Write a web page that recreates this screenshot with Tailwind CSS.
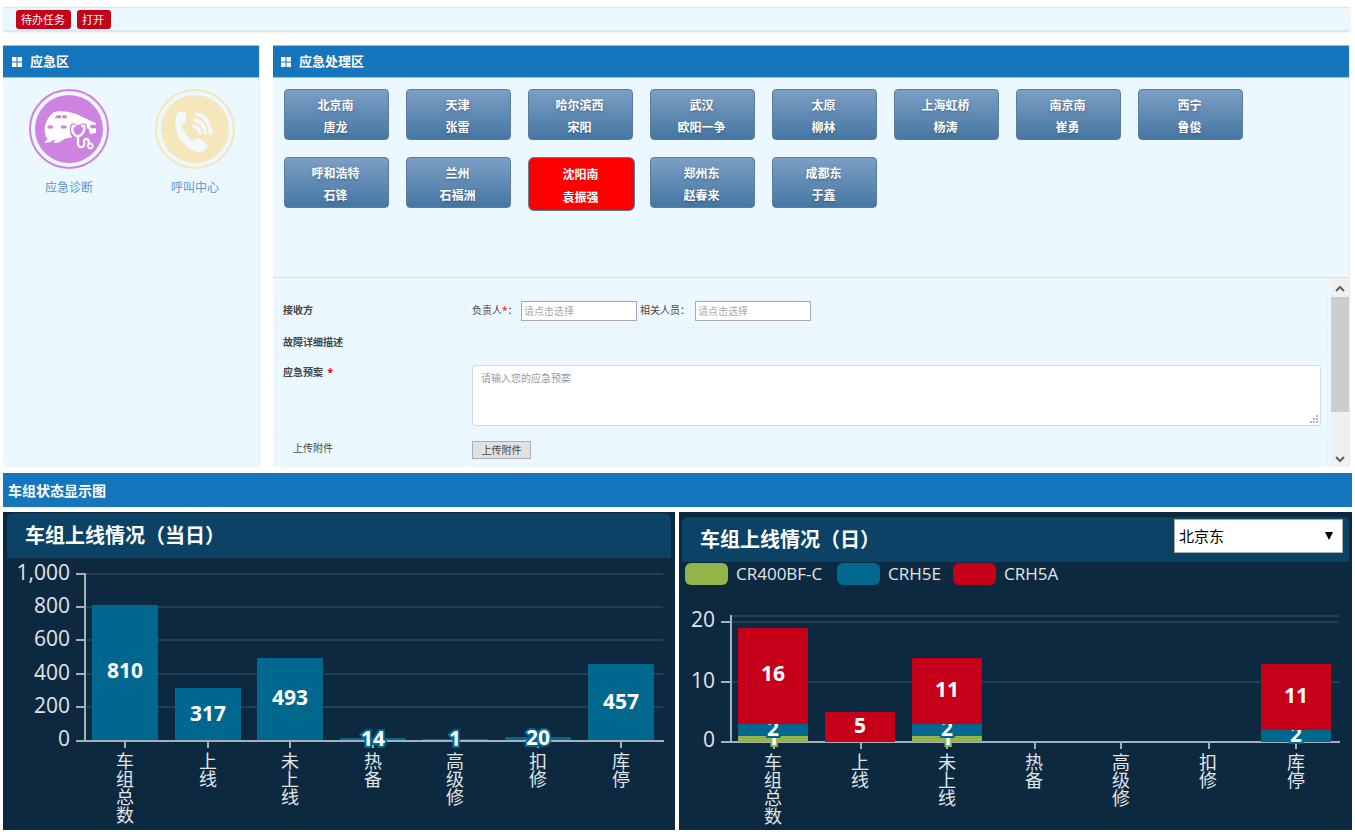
<!DOCTYPE html>
<html lang="zh-CN">
<head>
<meta charset="utf-8">
<meta name="viewport" content="width=device-width, initial-scale=1">
<title>应急处理</title>
<script src="https://cdn.jsdelivr.net/npm/@tailwindcss/browser@4"></script>
</head>
<body class="bg-white px-[3px] pt-[7px] pb-0.5 font-['Open_Sans','Noto_Sans_CJK_SC',sans-serif] text-[#444]">

<nav class="mr-0.5 flex h-6 items-center gap-1.5 border-y border-[#d3ebf7] bg-[#ecf8ff] pl-[13px] text-[11px] text-white shadow-sm">
  <button class="h-[19px] rounded-[3px] bg-[#c7001a] pr-1.5 pl-[5px] leading-[19px]">待办任务</button>
  <button class="h-[19px] rounded-[3px] bg-[#c7001a] pr-[7px] pl-[5px] leading-[19px]">打开</button>
</nav>

<main class="mt-[14px] mr-0.5 flex gap-[13px]">
  <section class="w-[257px] shrink-0 border-r border-[#dceffa] bg-[#ecf8ff]">
    <h2 class="flex h-[33px] items-center gap-2 border-y border-[#8cc3e6] bg-[#1576bd] pl-[9px] text-[13px] font-bold text-white">
      <svg class="h-2.5 w-2.5" viewBox="0 0 10 10" fill="currentColor"><path d="M0 0h4.500v4.500H0zM5.500 0H10v4.500H5.500zM0 5.500h4.500V10H0zM5.500 5.500H10V10H5.500z"/></svg>
      应急区
    </h2>
    <div class="flex pt-[11px] pl-[3px] text-xs text-[#5797d0]">
      <a href="#" class="flex w-[126px] flex-col items-center gap-[11px]">
        <svg class="h-20 w-20" viewBox="0 0 240 240" fill="none">
          <circle cx="120" cy="120" r="117" stroke="#cd83df" stroke-width="6"/>
          <circle cx="120" cy="120" r="102" fill="#cd83df"/>
          <path d="M48 110C54 91 62 76 78 68Q92 65 116 68C143 72 169 89 201 102V132L182 135L180 121Q170 113 158 116L158 106L144 108L126 116L124 134L130 145L108 149L88 161H74L80 151L62 160L45 161L56 150C47 140 46 125 48 110Z" fill="#fff"/>
          <path d="M77 88L84 79H96V88ZM100 79H113V88H100Z" fill="#cd83df"/>
          <ellipse cx="64" cy="114" rx="9" ry="5" fill="#cd83df"/><ellipse cx="104" cy="114" rx="9" ry="5" fill="#cd83df"/>
          <path d="M183 109L201 107V118H185Z" fill="#cd83df"/>
          <path d="M140 111H131Q125 135 147 143Q169 133 166 111H157M147 143V165Q150 177 160 174Q168 170 165 157Q167 146 176 151Q181 155 179 166" stroke="#cd83df" stroke-width="15" stroke-linejoin="round"/>
          <path d="M140 111H131Q125 135 147 143Q169 133 166 111H157M147 143V165Q150 177 160 174Q168 170 165 157Q167 146 176 151Q181 155 179 166" stroke="#fff" stroke-width="7" stroke-linejoin="round"/>
          <circle cx="184" cy="171" r="7" stroke="#fff" stroke-width="5"/>
        </svg>
        应急诊断
      </a>
      <a href="#" class="flex w-[126px] flex-col items-center gap-[11px]">
        <svg class="h-20 w-20" viewBox="0 0 240 240" fill="none">
          <circle cx="120" cy="120" r="117" stroke="#f5e6b8" stroke-width="6"/>
          <circle cx="120" cy="120" r="102" fill="#f5e6bc"/>
          <path d="M68 71Q79 64 88 68Q93 71 94 90Q94 99 86 103Q80 108 83 118Q91 138 106 151Q113 156 122 150Q130 146 139 151Q153 160 158 169Q158 181 143 188Q125 193 106 180Q66 153 61 108Q58 83 68 71Z" fill="#f1f9ff"/>
          <path d="M114 111Q132 113 136 136M118 93Q148 96 152 136M122 75Q163 80 167 136" stroke="#f1f9ff" stroke-width="11"/>
        </svg>
        呼叫中心
      </a>
    </div>
  </section>

  <section class="min-w-0 flex-1 border-r border-[#dceffa] bg-[#ecf8ff]">
    <h2 class="flex h-[33px] items-center gap-2 border-y border-[#8cc3e6] bg-[#1576bd] pl-2 text-[13px] font-bold text-white">
      <svg class="h-2.5 w-2.5" viewBox="0 0 10 10" fill="currentColor"><path d="M0 0h4.500v4.500H0zM5.500 0H10v4.500H5.500zM0 5.500h4.500V10H0zM5.500 5.500H10V10H5.500z"/></svg>
      应急处理区
    </h2>
    <div class="flex min-h-[200px] flex-wrap content-start items-start gap-[17px] border-b border-[#c5e3f3] pt-[11px] pl-[11px] text-xs leading-[22px] font-bold text-white [&>button]:h-[51px] [&>button]:w-[105px] [&>button]:rounded [&>button]:border [&>button]:border-[#5a7d9c] [&>button]:bg-linear-to-b [&>button]:from-[#7c9fc5] [&>button]:to-[#4577a3] [&>button]:pt-1 [&>button]:pr-0.5 [&>button]:text-shadow-md">
      <button>北京南<br>唐龙</button>
      <button>天津<br>张雷</button>
      <button>哈尔滨西<br>宋阳</button>
      <button>武汉<br>欧阳一争</button>
      <button>太原<br>柳林</button>
      <button>上海虹桥<br>杨涛</button>
      <button>南京南<br>崔勇</button>
      <button>西宁<br>鲁俊</button>
      <button>呼和浩特<br>石锋</button>
      <button>兰州<br>石福洲</button>
      <button class="-mr-0.5 h-[54px]! w-[107px]! rounded-md! from-[#ff0000]! to-[#ff0000]! leading-[23px] text-shadow-none!">沈阳南<br>袁振强</button>
      <button>郑州东<br>赵春来</button>
      <button>成都东<br>于鑫</button>
    </div>

    <div class="flex h-[189px]">
      <form class="min-w-0 flex-1 overflow-hidden pt-[15px] pr-[3px] pl-[3px] text-[10px]">
        <table class="w-full table-fixed border-collapse text-left align-top [&_td]:border [&_td]:border-[#e3f2fb] [&_td]:px-1.5 [&_th]:border [&_th]:border-[#e3f2fb] [&_th]:px-1.5">
          <colgroup><col class="w-[189px]"><col></colgroup>
          <tr class="h-[34px]">
            <th>接收方</th>
            <td>
              <div class="flex items-center">
                <label for="owner" class="w-[49px]">负责人<span class="text-[#f00]">*</span>：</label>
                <input id="owner" type="text" placeholder="请点击选择" class="h-5 w-[116px] border border-[#a9a9a9] bg-white px-0.5 placeholder:text-[#aaa]">
                <label for="staff" class="ml-[3px] w-[55px]">相关人员：</label>
                <input id="staff" type="text" placeholder="请点击选择" class="h-5 w-[116px] border border-[#a9a9a9] bg-white px-0.5 placeholder:text-[#aaa]">
              </div>
            </td>
          </tr>
          <tr class="h-[30px]"><th>故障详细描述</th><td></td></tr>
          <tr class="h-[75px]">
            <th class="pt-[7px] align-top"><label for="plan">应急预案 <span class="ml-0.5 text-[#f00]">*</span></label></th>
            <td>
              <div class="relative">
                <textarea id="plan" placeholder="请输入您的应急预案" class="block h-[61px] w-full resize-none rounded-[3px] border border-[#d5d9dd] bg-white px-2 py-[5px] placeholder:text-[#999]"></textarea>
                <svg class="absolute right-[3px] bottom-[3px] h-2 w-2" viewBox="0 0 8 8" fill="#b5b5b5"><path d="M6 0h2v2H6zM3 3h2v2H3zM6 3h2v2H6zM0 6h2v2H0zM3 6h2v2H3zM6 6h2v2H6z"/></svg>
              </div>
            </td>
          </tr>
          <tr class="h-[35px]">
            <th class="pb-1 pl-4! font-normal">上传附件</th>
            <td><button type="button" class="block h-[18px] w-[59px] border border-[#adadad] bg-[#e1e1e1]">上传附件</button></td>
          </tr>
        </table>
      </form>
      <div class="flex w-[18px] flex-col items-center bg-[#f0f0f0] pt-px">
        <svg class="h-[18px] w-[18px]" viewBox="0 0 18 18" fill="none" stroke="#606060" stroke-width="2"><path d="M5 12L9 8L13 12"/></svg>
        <div class="h-[115px] w-full bg-[#cdcdcd]"></div>
        <svg class="mt-auto h-[18px] w-[18px]" viewBox="0 0 18 18" fill="none" stroke="#606060" stroke-width="2"><path d="M5 8L9 12L13 8"/></svg>
      </div>
    </div>
  </section>
</main>

<h2 class="mt-1.5 flex h-[34px] items-center bg-[#1576bd] pt-px pl-[5px] text-sm font-bold text-white">车组状态显示图</h2>

<div class="mt-[5px] flex gap-1">
  <section class="min-w-0 flex-[672] bg-[#0d2940]">
    <h3 class="mx-1 mt-px flex h-[45px] items-center rounded-t-md bg-[#0c4265] pt-px pl-[18px] text-xl font-bold text-white">车组上线情况（当日）</h3>
    <svg class="block h-auto w-full" viewBox="0 0 672 272">
      <g stroke="#263e53" stroke-width="2"><path d="M83 16H660M83 49H660M83 82H660M83 116H660M83 149H660"/></g>
      <g stroke="#a6b0b9" stroke-width="2" fill="none">
        <path d="M82 15V183M73 183H661"/>
        <path d="M73 16H82M73 49H82M73 82H82M73 116H82M73 149H82M122 183V190M205 183V190M287 183V190M370 183V190M453 183V190M535 183V190M618 183V190"/>
      </g>
      <g fill="#e2e5e8" font-size="21" text-anchor="end">
        <text x="67" y="22">1,000</text><text x="67" y="55">800</text><text x="67" y="88">600</text>
        <text x="67" y="122">400</text><text x="67" y="155">200</text><text x="67" y="188">0</text>
      </g>
      <g fill="#00688f">
        <path d="M89 47h66v135H89zM172 130h66v52H172zM254 100h66v82H254zM337 180h66v2H337zM419 181h66v1H419zM502 179h66v3H502zM585 106h66v76H585z"/>
      </g>
      <g fill="#fff" stroke="#00688f" stroke-width="4" paint-order="stroke" font-size="21" font-weight="700" text-anchor="middle" font-family="Noto Sans">
        <text x="122" y="120">810</text><text x="205" y="163">317</text><text x="287" y="147">493</text>
        <text x="370" y="188">14</text><text x="452" y="188">1</text><text x="535" y="187">20</text><text x="618" y="151">457</text>
      </g>
      <g fill="#e2e5e8" font-size="18" text-anchor="middle">
        <text><tspan x="122" y="210">车</tspan><tspan x="122" y="228">组</tspan><tspan x="122" y="246">总</tspan><tspan x="122" y="264">数</tspan></text>
        <text><tspan x="205" y="210">上</tspan><tspan x="205" y="228">线</tspan></text>
        <text><tspan x="287" y="210">未</tspan><tspan x="287" y="228">上</tspan><tspan x="287" y="246">线</tspan></text>
        <text><tspan x="370" y="210">热</tspan><tspan x="370" y="228">备</tspan></text>
        <text><tspan x="452" y="210">高</tspan><tspan x="452" y="228">级</tspan><tspan x="452" y="246">修</tspan></text>
        <text><tspan x="535" y="210">扣</tspan><tspan x="535" y="228">修</tspan></text>
        <text><tspan x="618" y="210">库</tspan><tspan x="618" y="228">停</tspan></text>
      </g>
    </svg>
  </section>

  <section class="min-w-0 flex-[673] bg-[#0d2940]">
    <div class="mx-[3px] mt-[5px] flex h-[45px] items-start justify-between rounded-t-md bg-[#0c4265] pt-0.5 pr-1.5 pl-[18px]">
      <h3 class="pt-1.5 text-xl leading-[30px] font-bold text-white">车组上线情况（日）</h3>
      <div class="relative">
        <select aria-label="车站" class="h-[34px] w-[169px] appearance-none border border-[#a9a9a9] bg-white pl-1 text-[15px] text-black"><option>北京东</option></select>
        <svg class="pointer-events-none absolute top-3 right-[9px] h-2.5 w-2.5" viewBox="0 0 10 10"><path d="M1 1H9L5 9Z"/></svg>
      </div>
    </div>
    <div class="flex h-6 items-center pl-1.5 text-[17px] leading-[22px] text-[#e2e5e8]">
      <span class="mr-2 h-[22px] w-[43px] rounded-md bg-[#93b548]"></span><span class="w-[101px]">CR400BF-C</span>
      <span class="mr-2 h-[22px] w-[43px] rounded-md bg-[#00688f]"></span><span class="w-[65px]">CRH5E</span>
      <span class="mr-2 h-[22px] w-[43px] rounded-md bg-[#c7001a]"></span><span>CRH5A</span>
    </div>
    <svg class="block h-auto w-full" viewBox="0 0 673 244">
      <g stroke="#263e53" stroke-width="2"><path d="M52 30H660M52 36H660M52 96H660"/></g>
      <g stroke="#a6b0b9" stroke-width="2" fill="none">
        <path d="M52 29V156M42 156H661"/>
        <path d="M42 36H52M42 96H52M95 156V163M182 156V163M268 156V163M356 156V163M442 156V163M530 156V163M617 156V163"/>
      </g>
      <g fill="#e2e5e8" font-size="21" text-anchor="end"><text x="36" y="41">20</text><text x="36" y="102">10</text><text x="36" y="161">0</text></g>
      <g paint-order="stroke" stroke-width="4" font-size="21" font-weight="700" text-anchor="middle" font-family="Noto Sans">
        <path d="M59 150h70v6H59zM233 150h70v6H233z" fill="#93b548"/>
        <g fill="#fff" stroke="#93b548"><text x="94" y="159">1</text><text x="268" y="159">1</text></g>
        <path d="M59 138h70v12H59zM233 138h70v12H233zM582 144h70v12H582z" fill="#00688f"/>
        <g fill="#fff" stroke="#00688f"><text x="94" y="150">2</text><text x="268" y="150">2</text><text x="617" y="156">2</text></g>
        <path d="M59 42h70v96H59zM146 126h70v30H146zM233 72h70v66H233zM582 78h70v66H582z" fill="#c7001a"/>
        <g fill="#fff" stroke="#c7001a"><text x="94" y="95">16</text><text x="181" y="147">5</text><text x="268" y="111">11</text><text x="617" y="117">11</text></g>
      </g>
      <g fill="#e2e5e8" font-size="18" text-anchor="middle">
        <text><tspan x="94" y="183">车</tspan><tspan x="94" y="201">组</tspan><tspan x="94" y="219">总</tspan><tspan x="94" y="237">数</tspan></text>
        <text><tspan x="181" y="183">上</tspan><tspan x="181" y="201">线</tspan></text>
        <text><tspan x="268" y="183">未</tspan><tspan x="268" y="201">上</tspan><tspan x="268" y="219">线</tspan></text>
        <text><tspan x="355" y="183">热</tspan><tspan x="355" y="201">备</tspan></text>
        <text><tspan x="442" y="183">高</tspan><tspan x="442" y="201">级</tspan><tspan x="442" y="219">修</tspan></text>
        <text><tspan x="529" y="183">扣</tspan><tspan x="529" y="201">修</tspan></text>
        <text><tspan x="617" y="183">库</tspan><tspan x="617" y="201">停</tspan></text>
      </g>
    </svg>
  </section>
</div>
</body>
</html>
